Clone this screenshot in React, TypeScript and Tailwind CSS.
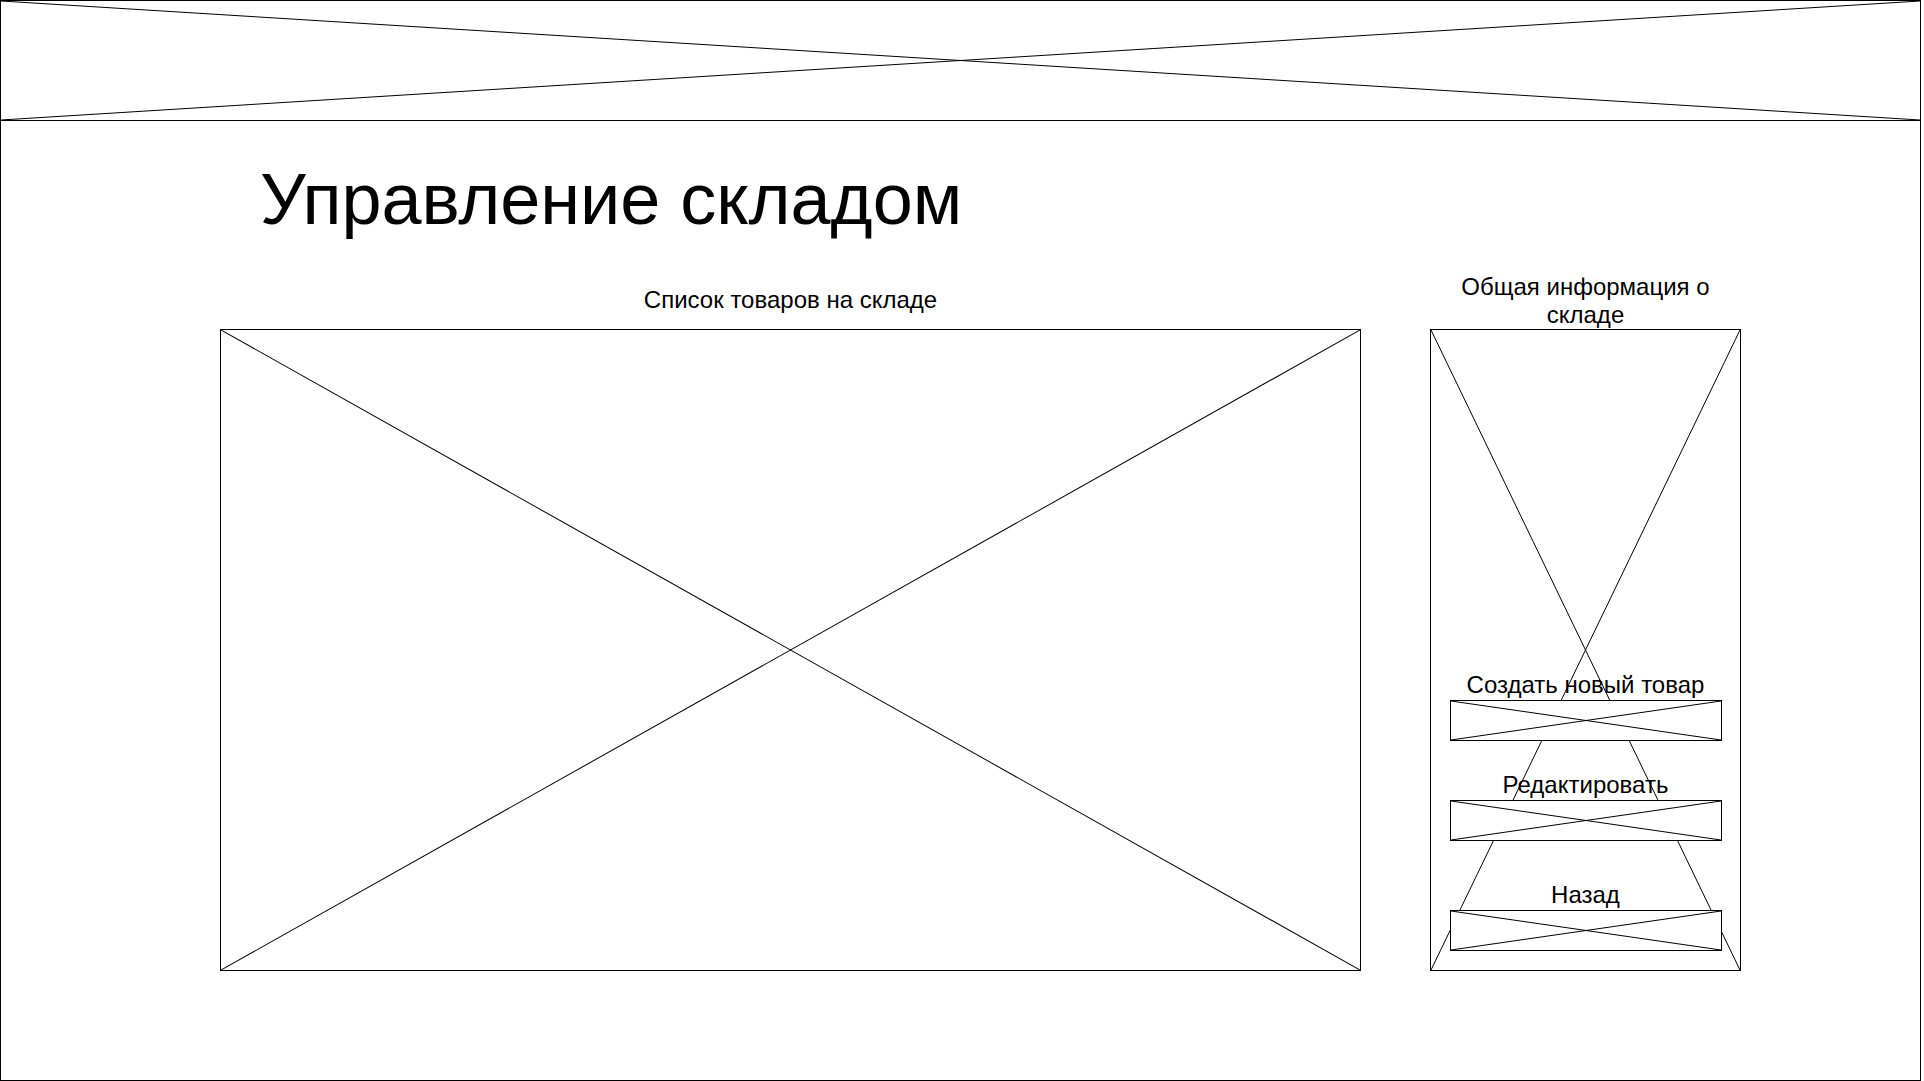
import React from 'react'

// перекрёсток-заглушка для пустых блоков
const Cross: React.FC<{ color?: string }> = ({ color = '#000' }) => (
  <svg className="absolute inset-0 w-full h-full pointer-events-none" viewBox="0 0 100 100" preserveAspectRatio="none">
    <line x1="0" y1="0" x2="100" y2="100" stroke={color} strokeWidth="1" vectorEffect="non-scaling-stroke" />
    <line x1="0" y1="100" x2="100" y2="0" stroke={color} strokeWidth="1" vectorEffect="non-scaling-stroke" />
  </svg>
)

const Action: React.FC<{ label: string; className?: string }> = ({ label, className = '' }) => (
  <div className={`relative z-10 flex flex-col items-center ${className}`}>
    <span className="h-[28px] text-[24px] leading-[26px] text-black">{label}</span>
    <div className="relative w-[272px] h-[41px] border border-black bg-white">
      <Cross />
    </div>
  </div>
)

const App: React.FC = () => {
  return (
    <div className="w-[1921px] h-[1081px] border border-black bg-white flex flex-col font-['Liberation_Sans',Arial,sans-serif] text-black">
      {/* шапка */}
      <header className="relative h-[120px] shrink-0 border-b border-black">
        <Cross />
      </header>

      <main className="flex flex-col">
        <h1 className="mt-[41px] pl-[259px] text-[72px] leading-[75px] font-normal">Управление складом</h1>

        <div className="flex pl-[219px] gap-[69px]">
          {/* список товаров */}
          <section className="flex flex-col w-[1141px]">
            <div className="h-[92px] flex items-end justify-center pb-[15px]">
              <span className="text-[24px] leading-[28px]">Список товаров на складе</span>
            </div>
            <div className="relative h-[642px] border border-black">
              <Cross />
            </div>
          </section>

          {/* общая информация */}
          <aside className="flex flex-col w-[311px]">
            <div className="h-[92px] flex items-end justify-center">
              <span className="text-[24px] leading-[28px] text-center">Общая информация о складе</span>
            </div>
            <div className="relative h-[642px] border border-black flex flex-col items-center justify-end pb-[19px]">
              <Cross />
              <Action label="Создать новый товар" />
              <Action label="Редактировать" className="mt-[31px]" />
              <Action label="Назад" className="mt-[41px]" />
            </div>
          </aside>
        </div>
      </main>
    </div>
  )
}

export default App
